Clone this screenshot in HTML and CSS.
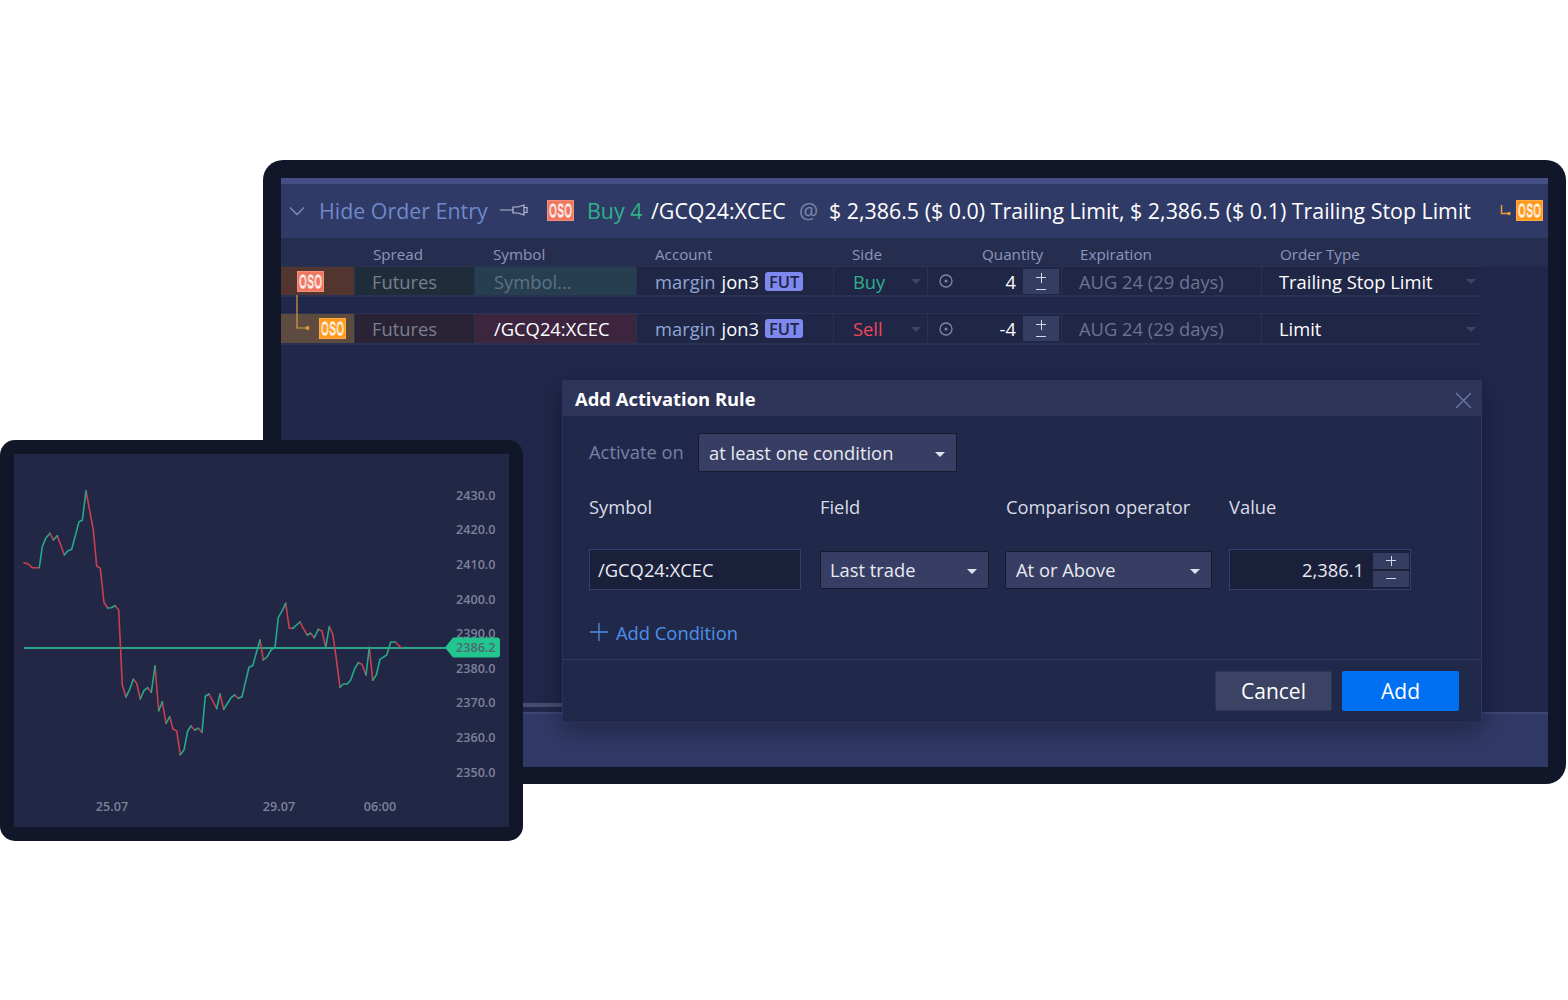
FILE: index.html
```html
<!DOCTYPE html>
<html lang="en">
<head>
<meta charset="utf-8">
<title>Add Activation Rule</title>
<link rel="stylesheet" href="styles.css">
</head>
<body>
<div class="stage">
  <section class="frame frame-main">
    <div class="screen-main">
      <div class="strip"></div>
      <header class="entry-head">
        <svg class="chev" width="16" height="10" viewBox="0 0 16 10"><path d="M1 1.500L8 8.500L15 1.500" fill="none" stroke="#7d8fc4" stroke-width="1.300"/></svg>
        <span class="hide-label">Hide Order Entry</span>
        <svg class="pin" width="28" height="16" viewBox="0 0 28 16"><path d="M0 8H13M13 4.500V11.500M13 5H18L24 3V13L18 11H13M24 5.500H27V10.500H24" fill="none" stroke="#b4bbd2" stroke-width="1.200"/></svg>
        <span class="oso oso-red head-oso"><span>OSO</span></span>
        <span class="buy-summary">Buy 4</span>
        <span class="symbol-summary">/GCQ24:XCEC</span>
        <span class="at-sign">@</span>
        <span class="price-summary">$ 2,386.5 ($ 0.0) Trailing Limit, $ 2,386.5 ($ 0.1) Trailing Stop Limit</span>
        <svg class="child-arrow" width="12" height="14" viewBox="0 0 12 14"><path d="M1.500 2V10.500H8" fill="none" stroke="#f09a35" stroke-width="1.500"/><circle cx="9" cy="10.500" r="1.700" fill="#f09a35"/></svg>
        <span class="oso oso-orange"><span>OSO</span></span>
      </header>

      <div class="table-head">
        <span class="th th-flag"></span>
        <span class="th">Spread</span>
        <span class="th">Symbol</span>
        <span class="th">Account</span>
        <span class="th">Side</span>
        <span class="th th-qty">Quantity</span>
        <span class="th">Expiration</span>
        <span class="th">Order Type</span>
      </div>

      <div class="rows">
        <svg class="connector" width="14" height="36" viewBox="0 0 14 36"><path d="M1 0V33H11" fill="none" stroke="#d79a4a" stroke-width="1.200"/><circle cx="11.500" cy="33" r="2" fill="#e8963a"/></svg>
        <div class="row row-a">
          <div class="cell flag flag-a"><span class="oso oso-red"><span>OSO</span></span></div>
          <div class="cell spread spread-a">Futures</div>
          <div class="cell sym sym-a">Symbol...</div>
          <div class="cell acct"><span class="acct-type">margin</span><span class="acct-name">jon3</span><span class="fut">FUT</span></div>
          <div class="cell side side-buy">Buy<i class="mini-caret"></i></div>
          <div class="cell qty">
            <svg class="tif" width="16" height="16" viewBox="0 0 16 16"><circle cx="8" cy="8" r="6" fill="none" stroke="#7d85a8" stroke-width="1.300"/><circle cx="8" cy="8" r="1.500" fill="#7d85a8"/></svg>
            <span class="qty-num">4</span>
            <span class="qty-step"><i class="plus-mark"></i><i class="minus-mark"></i></span>
          </div>
          <div class="cell expiry">AUG 24 (29 days)</div>
          <div class="cell otype">Trailing Stop Limit<i class="mini-caret"></i></div>
        </div>
        <div class="row row-b">
          <div class="cell flag flag-b"><span class="oso oso-orange"><span>OSO</span></span></div>
          <div class="cell spread spread-b">Futures</div>
          <div class="cell sym sym-b">/GCQ24:XCEC</div>
          <div class="cell acct"><span class="acct-type">margin</span><span class="acct-name">jon3</span><span class="fut">FUT</span></div>
          <div class="cell side side-sell">Sell<i class="mini-caret"></i></div>
          <div class="cell qty">
            <svg class="tif" width="16" height="16" viewBox="0 0 16 16"><circle cx="8" cy="8" r="6" fill="none" stroke="#7d85a8" stroke-width="1.300"/><circle cx="8" cy="8" r="1.500" fill="#7d85a8"/></svg>
            <span class="qty-num">-4</span>
            <span class="qty-step"><i class="plus-mark"></i><i class="minus-mark"></i></span>
          </div>
          <div class="cell expiry">AUG 24 (29 days)</div>
          <div class="cell otype">Limit<i class="mini-caret"></i></div>
        </div>
      </div>

      <div class="main-fill"><div class="scroll-line"></div></div>
      <div class="bottom-bar"></div>

      <div class="dialog">
        <div class="dialog-title">
          <span>Add Activation Rule</span>
          <svg width="17" height="17" viewBox="0 0 17 17"><path d="M1 1L16 16M16 1L1 16" stroke="#6b7aa8" stroke-width="1.300" fill="none"/></svg>
        </div>
        <div class="dialog-body">
          <div class="activate">
            <span class="activate-label">Activate on</span>
            <div class="select select-activate">at least one condition<i class="caret"></i></div>
          </div>
          <div class="field-grid">
            <span class="field-label">Symbol</span>
            <span class="field-label">Field</span>
            <span class="field-label label-op">Comparison operator</span>
            <span class="field-label">Value</span>
            <div class="input input-symbol">/GCQ24:XCEC</div>
            <div class="select select-field">Last trade<i class="caret"></i></div>
            <div class="select select-op">At or Above<i class="caret"></i></div>
            <div class="input input-value">
              <span>2,386.1</span>
              <span class="val-step"><b class="val-btn"><i class="plus-mark"></i></b><b class="val-btn"><i class="minus-mark"></i></b></span>
            </div>
          </div>
          <div class="add-cond">
            <svg width="18" height="18" viewBox="0 0 18 18"><path d="M9 0V18M0 9H18" stroke="#4d8fe8" stroke-width="1.300"/></svg>
            <span>Add Condition</span>
          </div>
        </div>
        <div class="dialog-foot">
          <button class="btn btn-cancel">Cancel</button>
          <button class="btn btn-add">Add</button>
        </div>
      </div>
    </div>
  </section>

  <section class="frame frame-chart">
    <svg class="chart" width="495" height="373" viewBox="14 454 495 373">
      <g class="axis">
        <text x="495.500" y="499.500">2430.0</text>
        <text x="495.500" y="534">2420.0</text>
        <text x="495.500" y="568.500">2410.0</text>
        <text x="495.500" y="603.500">2400.0</text>
        <text x="495.500" y="638">2390.0</text>
        <text x="495.500" y="672.500">2380.0</text>
        <text x="495.500" y="707">2370.0</text>
        <text x="495.500" y="742">2360.0</text>
        <text x="495.500" y="776.500">2350.0</text>
      </g>
      <g class="axis axis-x">
        <text x="112" y="811">25.07</text>
        <text x="279" y="811">29.07</text>
        <text x="380" y="811">06:00</text>
      </g>
      <path d="M24 648H446" stroke="#2ba58b" stroke-width="2" fill="none"/>
      <path class="line-red" d="M24 562.700L28.300 564L32.300 567.700L39.300 567.700M50 533.300L53.300 540M57.300 535.700L64.300 555M86 491L93.300 530L96.700 566L100.300 568.300L104 602.700L107.700 608M115 605.700L118.700 610L122.300 685L126 697M133.300 679.300L136.700 683.300L140.300 699M147.700 687.700L151.300 692.300M155 666L158.700 710.700M162.300 701.700L166 723.300M169.700 716.700L173 729L176.700 731L180.300 754.700M191 726L194.700 730M198.300 728.300L202 732.300M209 694L216.700 708.700M220 694L223.700 709.300M234.700 695L238.300 698.300M260 640L263.300 660M285.700 603.300L289.300 628.300L292.700 628.300M300 622L303.300 628.300L307.300 635M310.700 633.300L314.300 637.700M318.300 629.300L322 631L325.700 647.300M329.300 626.700L332.700 634L336 656.700L340 687.300M358.300 662.700L362 664.300L366 675M369.300 647.300L372.700 680.300M395 642L402 648.300"/>
      <path class="line-green" d="M39.300 567.700L42.300 546.700L45.700 538.300L50 533.300M53.300 540L57.300 535.700M64.300 555L67.700 551L71.700 549.300L79 521.700L82.300 520.300L86 491M107.700 608L111.300 607.700L115 605.700M126 697L129.700 689.300L133.300 679.300M140.300 699L144 690.700L147.700 687.700M151.300 692.300L155 666M158.700 710.700L162.300 701.700M166 723.300L169.700 716.700M180.300 754.700L184 750L187.700 731L191 726M194.700 730L198.300 728.300M202 732.300L205.300 696.300L209 694M216.700 708.700L220 694M223.700 709.300L231 697.700L234.700 695M238.300 698.300L242 696.700L249 667.300L252.700 665.700L260 640M263.300 660L267.300 656.700L271 650L275 647.300L278.300 617.300L281.700 611.700L285.700 603.300M292.700 628.300L300 622M307.300 635L310.700 633.300M314.300 637.700L318.300 629.300M325.700 647.300L329.300 626.700M340 687.300L343.300 684L347.300 684L350.700 680L354.700 668.700L358.300 662.700M366 675L369.300 647.300M372.700 680.300L376.300 675L380 659.300L386.700 655L390.700 642L395 642M402 648.300L406 647.300"/>
      <path d="M445 647.500L453 637.500H497Q500 637.500 500 640.500V654.500Q500 657.500 497 657.500H453Z" fill="#22c58d"/>
      <text class="price-tag" x="495.500" y="651.500">2386.2</text>
    </svg>
  </section>
</div>
</body>
</html>
```
FILE: styles.css
```css
* { box-sizing: border-box; }
html, body { margin: 0; background: #fff; }
body { font-family: "Open Sans", "Noto Sans", sans-serif; color: #fff; }
.stage { position: relative; width: 1568px; height: 1000px; overflow: hidden; }

.frame { position: absolute; background: #111728; }
.frame-main { left: 263px; top: 160px; width: 1303px; height: 624px; padding: 18px 18px 17px; border-radius: 20px; }
.frame-chart { left: 0; top: 440px; width: 523px; height: 401px; padding: 14px; border-radius: 15px; }

.screen-main { position: relative; display: flex; flex-direction: column; height: 100%; background: #20274a; }
.strip { height: 6px; background: #454f85; }

.entry-head { display: flex; align-items: center; height: 54px; padding: 0 0 2px 8px; background: #303a66; font-size: 21.400px; white-space: nowrap; }
.chev { margin: 2px 14px 0 0; }
.hide-label { color: #6f88c9; width: 181px; }
.pin { margin-right: 19px; }
.head-oso { margin-right: 13px; }
.buy-summary { color: #2fb08c; width: 64px; }
.symbol-summary { width: 148px; }
.at-sign { color: #7f86a6; width: 30px; }
.price-summary { width: 671px; }
.child-arrow { margin-right: 4px; }

.oso { display: inline-flex; align-items: center; justify-content: center; width: 27px; height: 21px; flex: none; box-shadow: inset 0 0 0 1px rgba(255,255,255,.18); }
.oso span { display: block; width: 23px; font: 400 19px/21px "Liberation Sans", sans-serif; letter-spacing: 1.500px; text-indent: -11px; white-space: nowrap; transform: scaleX(.5); color: transparent; -webkit-text-stroke: 1.100px #fff; }
.oso-red { background: #f0775f; }
.oso-orange { background: #ff9a1f; }

.table-head, .row { display: grid; grid-template-columns: 73px 119px 161px 196px 93px 133px 199px 220px; column-gap: 1px; }
.table-head { height: 28px; padding-top: 3px; background: #262e50; font-size: 15.200px; color: #8e96bb; align-items: center; }
.th { padding-left: 18px; }
.th-qty { padding-left: 54px; }

.rows { position: relative; display: flex; flex-direction: column; gap: 16px; width: 1201px; font-size: 18.350px; white-space: nowrap; }
.connector { position: absolute; left: 15px; top: 29px; z-index: 2; }
.row { background: #2a3254; border: 1px solid #2a3254; border-width: 1px 1px 2px 0; }
.row-a { height: 31px; }
.row-b { height: 32px; }
.cell { display: flex; align-items: center; background: #1f2646; padding-left: 17px; position: relative; min-width: 0; }
.flag { padding-left: 0; }
.flag-a { background: #52352f; padding-left: 16px; }
.flag-b { background: #5c4b3e; padding-left: 38px; }
.spread { color: #78808f; }
.spread-a { background: #1f2c3a; }
.spread-b { background: #2a2235; }
.sym { padding-left: 19px; }
.sym-a { background: #263e50; color: #5f7283; }
.sym-b { background: #3d2540; }
.acct { padding-left: 18px; }
.acct-type { color: #93a5d6; margin-right: 6px; }
.acct-name { margin-right: 6px; }
.fut { background: #7e88ef; color: #1f2646; font-size: 16.500px; font-weight: 600; line-height: 19px; height: 19px; padding: 0 4px; border-radius: 3px; }
.side { padding-left: 19px; }
.side-buy { color: #2fb08c; }
.side-sell { color: #f0475a; }
.mini-caret { position: absolute; right: 6px; top: 50%; margin-top: -2px; border: 5px solid transparent; border-top-color: #3b4467; border-bottom: 0; }
.qty { padding-left: 10px; }
.tif { flex: none; }
.qty-num { flex: 1; text-align: right; padding-right: 7px; }
.qty-step { position: relative; width: 36px; height: 25px; margin-right: 2px; background: #353d60; display: flex; flex-direction: column; align-items: center; justify-content: center; gap: 6px; }
.plus-mark { position: relative; display: block; width: 10px; height: 10px; }
.plus-mark::before { content: ""; position: absolute; left: 0; right: 0; top: 4px; height: 1px; background: #d5d9e8; }
.plus-mark::after { content: ""; position: absolute; top: 0; bottom: 0; left: 4.500px; width: 1px; background: #d5d9e8; }
.minus-mark { display: block; width: 10px; height: 1px; background: #d5d9e8; }
.expiry { color: #6c7390; }
.otype { padding-left: 17px; }

.main-fill { flex: 1; display: flex; flex-direction: column; justify-content: flex-end; }
.scroll-line { height: 4px; width: 60px; margin: 0 0 5px 240px; background: #474d6c; }
.bottom-bar { height: 55px; background: #313a67; border-top: 2px solid #3d4675; }

.dialog { position: absolute; left: 281px; top: 202px; width: 920px; height: 343px; display: flex; flex-direction: column; background: #21294a; border: 1px solid #2a3363; box-shadow: 0 8px 24px rgba(0,0,0,.35); }
.dialog-title { display: flex; align-items: center; justify-content: space-between; height: 35px; padding: 0 9px 0 12px; background: #2d3457; font-size: 18.400px; font-weight: 700; }
.dialog-title svg { margin-top: 3px; }
.dialog-body { flex: 1; padding: 17px 0 0 26px; font-size: 18.350px; white-space: nowrap; }
.activate { display: flex; align-items: center; }
.activate-label { color: #7780a6; width: 109px; padding-bottom: 3px; }
.select { position: relative; display: flex; align-items: center; background: #373d63; border: 1px solid #151a30; border-radius: 2px; color: #e8eaf2; padding: 0 0 1px 10px; }
.select-activate { width: 259px; height: 39px; }
.caret { position: absolute; right: 11px; top: 50%; margin-top: -1px; border: 5px solid transparent; border-top-color: #dfe2ee; border-bottom: 0; }
.field-grid { display: grid; grid-template-columns: 231px 185px 224px 182px; grid-template-rows: 46px 41px; row-gap: 20px; margin-top: 11px; align-items: center; }
.field-label { color: #d8dbe6; }
.label-op { margin-left: 1px; }
.input { display: flex; align-items: center; height: 41px; background: #1a1f3a; border: 1px solid #353e6c; color: #e8eaf2; }
.input-symbol { width: 212px; padding-left: 8px; }
.input-value { width: 182px; justify-content: flex-end; gap: 9px; padding-right: 1px; }
.select-field { width: 169px; height: 38px; padding-left: 9px; }
.select-op { width: 207px; height: 38px; padding-left: 10px; }
.val-step { display: flex; flex-direction: column; gap: 2px; }
.val-btn { display: flex; align-items: center; justify-content: center; width: 36px; height: 16px; background: #353d60; }
.add-cond { display: flex; align-items: center; gap: 8px; margin: 33px 0 0 1px; color: #4d8fe8; height: 18px; }
.dialog-foot { display: flex; justify-content: flex-end; gap: 10px; height: 63px; padding: 11px 22px 0 0; border-top: 1px solid #323a5e; }
.btn { width: 117px; height: 40px; border: 0; padding: 0; border-radius: 2px; color: #fff; font: 400 21px "Open Sans", sans-serif; }
.btn-cancel { background: #3b4264; border: 1px solid #2f3554; }
.btn-add { background: #0070f3; }

.chart { display: block; background: #212744; }
.axis text { font-size: 12.600px; font-weight: 600; fill: #7c829c; text-anchor: end; }
.axis-x text { text-anchor: middle; }
.line-red, .line-green { fill: none; stroke-width: 1.600; stroke-linejoin: round; stroke-linecap: round; }
.line-red { stroke: #c8404f; }
.line-green { stroke: #26a98a; }
.price-tag { font-size: 12.600px; font-weight: 600; fill: #4f6870; text-anchor: end; }
```
